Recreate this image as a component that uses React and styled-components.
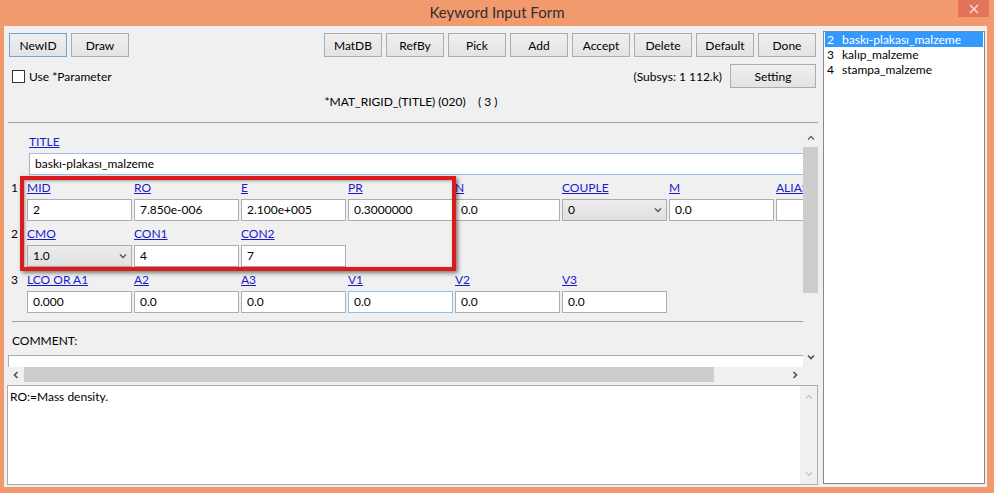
import React from 'react';
import styled, { createGlobalStyle } from 'styled-components';

const FONT = 'Lato, "Noto Sans", sans-serif';

const GlobalStyle = createGlobalStyle`
  html, body { margin: 0; padding: 0; background: #F29A6E; }
  body { font-family: ${FONT}; font-size: 12px; color: #000; }
  * { box-sizing: border-box; }
`;

const Window = styled.div`
  width: 994px;
  height: 493px;
  display: flex;
  flex-direction: column;
  background: #F29A6E;
  overflow: hidden;
`;

const TitleBar = styled.div`
  height: 26px;
  flex-shrink: 0;
  display: grid;
  grid-template-columns: 1fr auto 1fr;
  align-items: start;
`;

const TitleText = styled.div`
  grid-column: 2;
  font-size: 15px;
  line-height: 25px;
  color: #2e2e2e;
`;

const CloseBtn = styled.div`
  grid-column: 3;
  justify-self: end;
  width: 31px;
  height: 17px;
  margin-right: 5px;
  background: #E3735A;
  display: flex;
  align-items: center;
  justify-content: center;
`;

const Client = styled.div`
  flex: 1;
  min-height: 0;
  display: flex;
  margin: 0 7px 6px 4px;
  background: #F0F0F0;
`;

const Main = styled.div`
  width: 814px;
  flex-shrink: 0;
  display: flex;
  flex-direction: column;
`;

const Toolbar = styled.div`
  display: flex;
  justify-content: space-between;
  padding: 7px 2px 0 5px;
`;

const BtnGroup = styled.div`
  display: flex;
  gap: 4px;
`;

const Button = styled.div`
  width: ${(p) => p.$w || 58}px;
  height: 24px;
  border: 1px solid ${(p) => (p.$primary ? '#6FA5DA' : '#ACACAC')};
  background: linear-gradient(#EFEFEF, #E3E3E3);
  display: flex;
  align-items: center;
  justify-content: center;
  color: #000;
`;

const OptionsRow = styled.div`
  height: 24px;
  margin-top: 7px;
  display: flex;
  align-items: center;
  justify-content: space-between;
  padding: 0 2px 0 8px;
`;

const CheckLabel = styled.div`
  display: flex;
  align-items: center;
  gap: 4px;
`;

const CheckBox = styled.span`
  width: 13px;
  height: 13px;
  border: 1px solid #333;
  background: #fff;
`;

const RightOpts = styled.div`
  display: flex;
  align-items: center;
  gap: 8px;
`;

const KeywordTitle = styled.div`
  margin-top: 6px;
  height: 16px;
  line-height: 16px;
  text-align: center;
  white-space: pre;
`;

const Panel = styled.div`
  margin: 12px 0 0 4px;
  width: 810px;
  height: 260px;
  flex-shrink: 0;
  border-top: 1px solid #A0A0A0;
  display: grid;
  grid-template-columns: 795px 15px;
  grid-template-rows: 244px 15px;
`;

const Viewport = styled.div`
  position: relative;
  overflow: hidden;
  padding-top: 8px;
  display: flex;
  flex-direction: column;
`;

const FormStack = styled.div`
  display: flex;
  flex-direction: column;
  gap: 2px;
`;

const TitleBlock = styled.div`
  padding-left: 21px;
  display: flex;
  flex-direction: column;
`;

const FieldLabel = styled.div`
  height: 22px;
  padding-top: 3px;
  line-height: 16px;
  color: #1A1ACF;
  text-decoration: underline;
  white-space: pre;
`;

const TitleInput = styled.div`
  width: 820px;
  height: 22px;
  border: 1px solid #9DBDE0;
  border-left-color: #ABADB3;
  background: #fff;
  padding: 0 5px;
  line-height: 20px;
`;

const FieldRow = styled.div`
  display: grid;
  grid-template-columns: 17px repeat(8, 105px);
  column-gap: 2px;
`;

const RowNum = styled.div`
  padding: 3px 0 0 3px;
  line-height: 16px;
`;

const Field = styled.div`
  display: flex;
  flex-direction: column;
`;

const TextBox = styled.div`
  height: 22px;
  border: 1px solid ${(p) => (p.$focus ? '#8FBDE8' : '#ABADB3')};
  background: #fff;
  padding: 0 5px;
  line-height: 20px;
  white-space: nowrap;
  overflow: hidden;
`;

const SelectBox = styled.div`
  height: 22px;
  border: 1px solid #ACACAC;
  background: linear-gradient(#EDEDED, #E0E0E0);
  padding: 0 4px 0 5px;
  display: flex;
  align-items: center;
  justify-content: space-between;
  line-height: 20px;
`;

const Separator = styled.div`
  margin: 8px 0 0 4px;
  height: 1px;
  background: #A0A0A0;
  flex-shrink: 0;
`;

const CommentLabel = styled.div`
  margin: 11px 0 0 4px;
  height: 16px;
  line-height: 16px;
  flex-shrink: 0;
`;

const CommentBox = styled.div`
  margin-top: 6px;
  height: 30px;
  flex-shrink: 0;
  border: 1px solid #ABADB3;
  border-right: none;
  background: #fff;
`;

const Highlight = styled.div`
  position: absolute;
  left: 12px;
  top: 53px;
  width: 436px;
  height: 95px;
  border: 4px solid #DA1C1C;
  box-shadow: 2px 2px 4px rgba(0, 0, 0, 0.5), inset 1px 1px 3px rgba(0, 0, 0, 0.35);
  pointer-events: none;
`;

const VScroll = styled.div`
  display: flex;
  flex-direction: column;
  background: #F0F0F0;
`;

const ArrowBox = styled.div`
  flex-shrink: 0;
  display: flex;
  justify-content: center;
  align-items: ${(p) => p.$align || 'center'};
  padding-bottom: ${(p) => p.$pb || 0}px;
  width: ${(p) => (p.$w ? `${p.$w}px` : 'auto')};
  height: ${(p) => (p.$h ? `${p.$h}px` : 'auto')};
`;

const VThumb = styled.div`
  height: 146px;
  flex-shrink: 0;
  background: #CDCDCD;
`;

const Spacer = styled.div`
  flex: 1;
`;

const HScroll = styled.div`
  display: flex;
  background: #F0F0F0;
`;

const HThumb = styled.div`
  width: 690px;
  flex-shrink: 0;
  background: #CDCDCD;
`;

const Corner = styled.div`
  background: #F0F0F0;
`;

const MsgBox = styled.div`
  margin: 3px 0 0 3px;
  width: 811px;
  height: 100px;
  flex-shrink: 0;
  border: 1px solid #ABADB3;
  background: #fff;
  display: flex;
`;

const MsgText = styled.div`
  flex: 1;
  padding: 3px 2px;
  line-height: 16px;
`;

const MsgScroll = styled.div`
  width: 17px;
  background: #F0F0F0;
  display: flex;
  flex-direction: column;
  justify-content: space-between;
  align-items: center;
  padding: 7px 0 6px;
`;

const ListBox = styled.div`
  flex: 1;
  margin: 5px 2px 3px 5px;
  border: 1px solid #828790;
  background: #fff;
  padding: 0 1px;
`;

const ListItem = styled.div`
  height: 15px;
  line-height: 15px;
  display: flex;
  padding-left: 2px;
  background: ${(p) => (p.$selected ? '#3399FF' : 'transparent')};
  color: ${(p) => (p.$selected ? '#fff' : '#000')};
  white-space: nowrap;
`;

const ItemNum = styled.span`
  width: 15px;
  flex-shrink: 0;
`;

const Chevron = ({ dir = 'down', color = '#606060', size = 8, weight = 1.5 }) => {
  const pts = {
    down: '1,2.5 4,5.5 7,2.5',
    up: '1,5.5 4,2.5 7,5.5',
    left: '5.5,1 2.5,4 5.5,7',
    right: '2.5,1 5.5,4 2.5,7',
  }[dir];
  return (
    <svg width={size} height={size} viewBox="0 0 8 8">
      <polyline points={pts} fill="none" stroke={color} strokeWidth={weight} />
    </svg>
  );
};

const rows = [
  {
    n: '1',
    fields: [
      { l: 'MID', v: '2' },
      { l: 'RO', v: '7.850e-006' },
      { l: 'E', v: '2.100e+005' },
      { l: 'PR', v: '0.3000000' },
      { l: 'N', v: '0.0' },
      { l: 'COUPLE', v: '0', select: true },
      { l: 'M', v: '0.0' },
      { l: 'ALIAS', v: '' },
    ],
  },
  {
    n: '2',
    fields: [
      { l: 'CMO', v: '1.0', select: true },
      { l: 'CON1', v: '4' },
      { l: 'CON2', v: '7' },
    ],
  },
  {
    n: '3',
    fields: [
      { l: 'LCO OR A1', v: '0.000' },
      { l: 'A2', v: '0.0' },
      { l: 'A3', v: '0.0' },
      { l: 'V1', v: '0.0', focus: true },
      { l: 'V2', v: '0.0' },
      { l: 'V3', v: '0.0' },
    ],
  },
];

const leftButtons = ['NewID', 'Draw'];
const rightButtons = ['MatDB', 'RefBy', 'Pick', 'Add', 'Accept', 'Delete', 'Default', 'Done'];
const items = [
  { n: '2', name: 'baskı-plakası_malzeme', selected: true },
  { n: '3', name: 'kalıp_malzeme' },
  { n: '4', name: 'stampa_malzeme' },
];

export default function App() {
  return (
    <>
      <GlobalStyle />
      <Window>
        <TitleBar>
          <TitleText>Keyword Input Form</TitleText>
          <CloseBtn>
            <svg width="10" height="10" viewBox="0 0 10 10">
              <path d="M1 1 L9 9 M9 1 L1 9" stroke="#F6D9CF" strokeWidth="1.6" />
            </svg>
          </CloseBtn>
        </TitleBar>
        <Client>
          <Main>
            <Toolbar>
              <BtnGroup>
                {leftButtons.map((b, i) => (
                  <Button key={b} $primary={i === 0}>{b}</Button>
                ))}
              </BtnGroup>
              <BtnGroup>
                {rightButtons.map((b) => (
                  <Button key={b}>{b}</Button>
                ))}
              </BtnGroup>
            </Toolbar>
            <OptionsRow>
              <CheckLabel>
                <CheckBox />
                <span>Use *Parameter</span>
              </CheckLabel>
              <RightOpts>
                <span>(Subsys: 1 112.k)</span>
                <Button $w={86}>Setting</Button>
              </RightOpts>
            </OptionsRow>
            <KeywordTitle>{'*MAT_RIGID_(TITLE) (020)    ( 3 )'}</KeywordTitle>
            <Panel>
              <Viewport>
                <FormStack>
                  <TitleBlock>
                    <FieldLabel>TITLE</FieldLabel>
                    <TitleInput>baskı-plakası_malzeme</TitleInput>
                  </TitleBlock>
                  {rows.map((r) => (
                    <FieldRow key={r.n}>
                      <RowNum>{r.n}</RowNum>
                      {r.fields.map((f) => (
                        <Field key={f.l}>
                          <FieldLabel>{f.l}</FieldLabel>
                          {f.select ? (
                            <SelectBox>
                              <span>{f.v}</span>
                              <Chevron dir="down" color="#555" size={8} weight={1.4} />
                            </SelectBox>
                          ) : (
                            <TextBox $focus={f.focus}>{f.v}</TextBox>
                          )}
                        </Field>
                      ))}
                    </FieldRow>
                  ))}
                </FormStack>
                <Separator />
                <CommentLabel>COMMENT:</CommentLabel>
                <CommentBox />
                <Highlight />
              </Viewport>
              <VScroll>
                <ArrowBox $h={24} $align="flex-end" $pb={5}>
                  <Chevron dir="up" color="#606060" size={8} weight={1.3} />
                </ArrowBox>
                <VThumb />
                <Spacer />
                <ArrowBox $h={20}>
                  <Chevron dir="down" color="#505050" size={8} weight={1.6} />
                </ArrowBox>
              </VScroll>
              <HScroll>
                <ArrowBox $w={16}>
                  <Chevron dir="left" color="#505050" size={8} weight={1.6} />
                </ArrowBox>
                <HThumb />
                <Spacer />
                <ArrowBox $w={17}>
                  <Chevron dir="right" color="#505050" size={8} weight={1.6} />
                </ArrowBox>
              </HScroll>
              <Corner />
            </Panel>
            <MsgBox>
              <MsgText>RO:=Mass density.</MsgText>
              <MsgScroll>
                <Chevron dir="up" color="#C4C4C4" size={8} weight={1.2} />
                <Chevron dir="down" color="#C4C4C4" size={8} weight={1.2} />
              </MsgScroll>
            </MsgBox>
          </Main>
          <ListBox>
            {items.map((it) => (
              <ListItem key={it.n} $selected={it.selected}>
                <ItemNum>{it.n}</ItemNum>
                <span>{it.name}</span>
              </ListItem>
            ))}
          </ListBox>
        </Client>
      </Window>
    </>
  );
}
